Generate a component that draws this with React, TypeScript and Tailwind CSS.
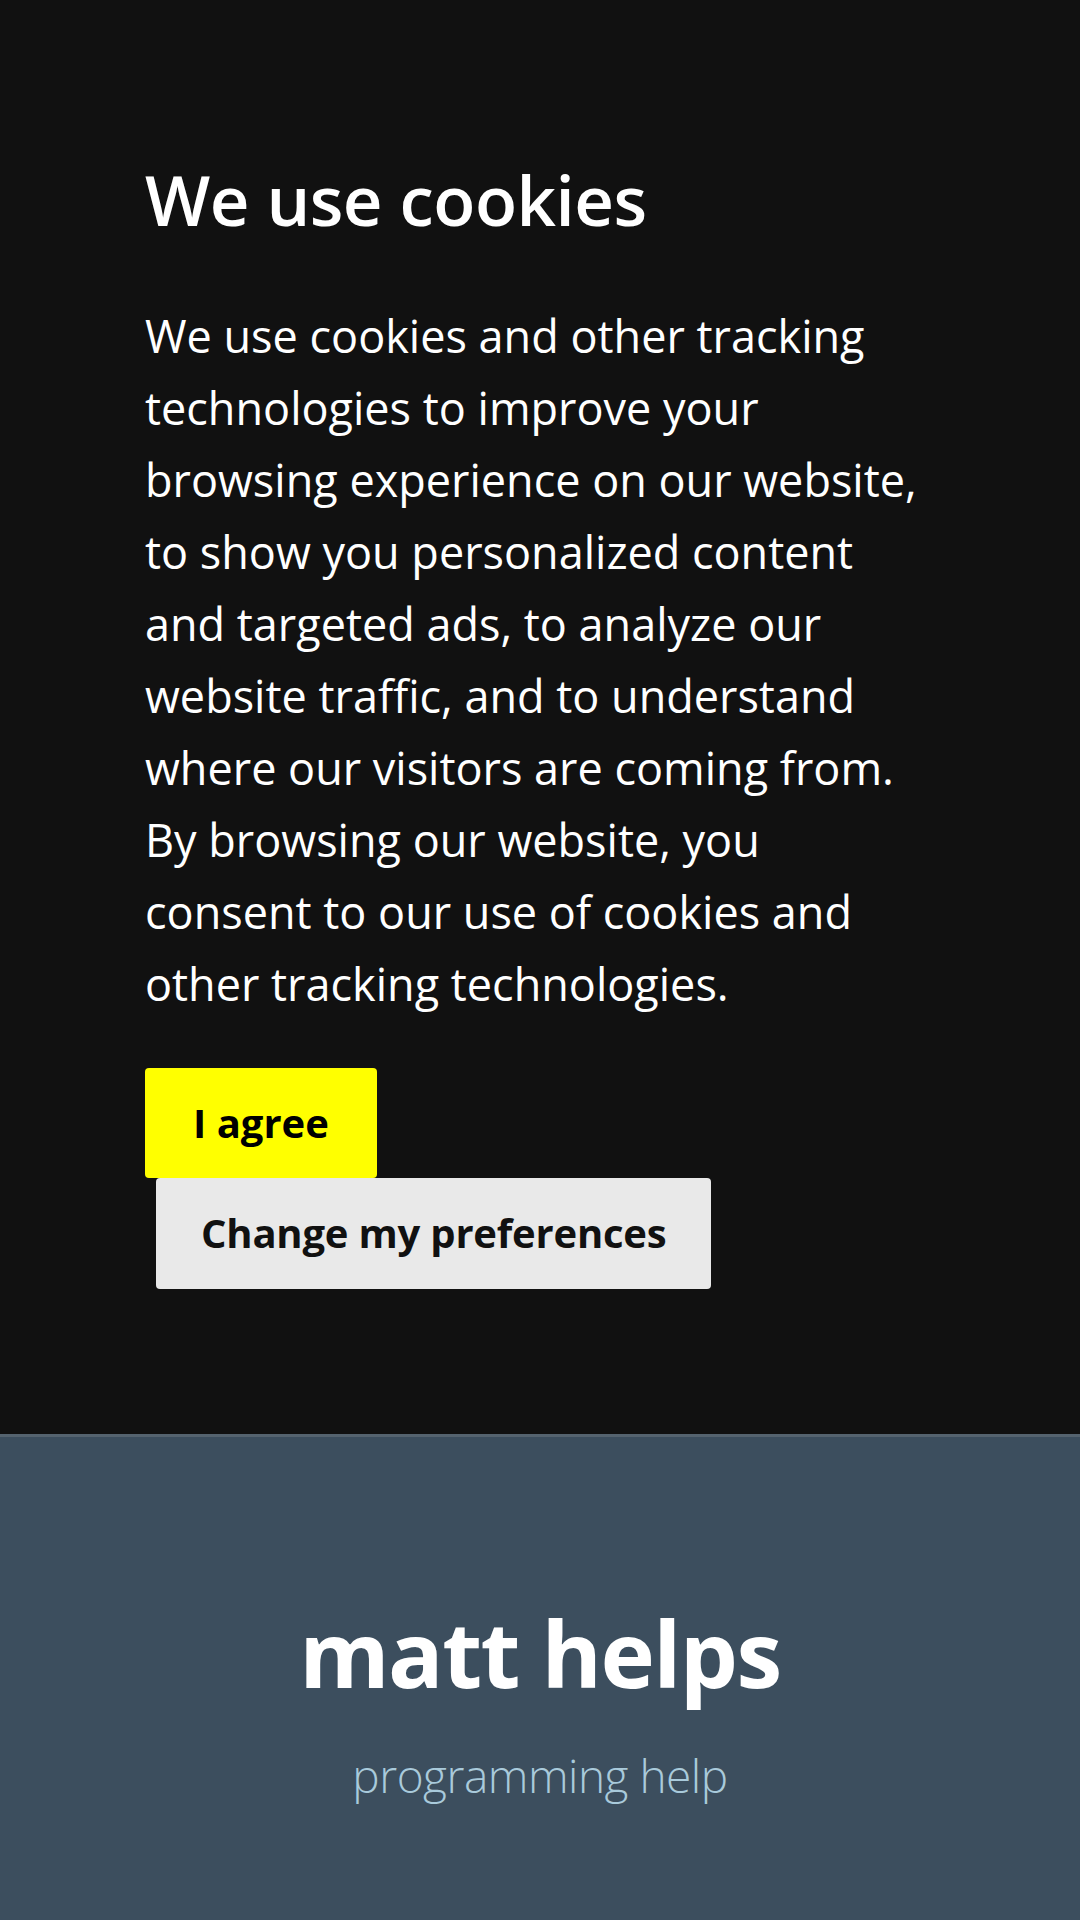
export default function App() {
  return (
    <div className="min-h-[1920px] bg-[#3c4e5e] font-['Open_Sans',sans-serif]">
      <section className="bg-[#111111] px-[145px] pt-[158px] pb-[145px]">
        <h1 className="text-[69px] font-semibold leading-[1.2] text-white tracking-[-0.5px]">We use cookies</h1>
        <p className="mt-[59px] max-w-[792px] text-[45px] leading-[72px] text-white">
          We use cookies and other tracking technologies to improve your browsing experience on our website, to show
          you personalized content and targeted ads, to analyze our website traffic, and to understand where our
          visitors are coming from. By browsing our website, you consent to our use of cookies and other tracking
          technologies.
        </p>
        <div className="mt-[48px] flex flex-col items-start">
          <button className="h-[110px] rounded-[4px] bg-[#ffff00] px-[48px] text-[40px] font-bold text-black">
            I agree
          </button>
          <button className="ml-[11px] h-[111px] whitespace-nowrap rounded-[4px] bg-[#e9e9e9] px-[45px] text-[40px] font-bold tracking-[-0.2px] text-[#111]">
            Change my preferences
          </button>
        </div>
      </section>
      <footer className="flex flex-col items-center border-t-[3px] border-[#55636f] pt-[170px]">
        <div className="text-[92px] font-bold leading-none tracking-[-1.5px] text-white">matt helps</div>
        <div className="mt-[42px] text-[46px] font-light tracking-[-0.5px] text-[#a9cadb]">programming help</div>
      </footer>
    </div>
  );
}
